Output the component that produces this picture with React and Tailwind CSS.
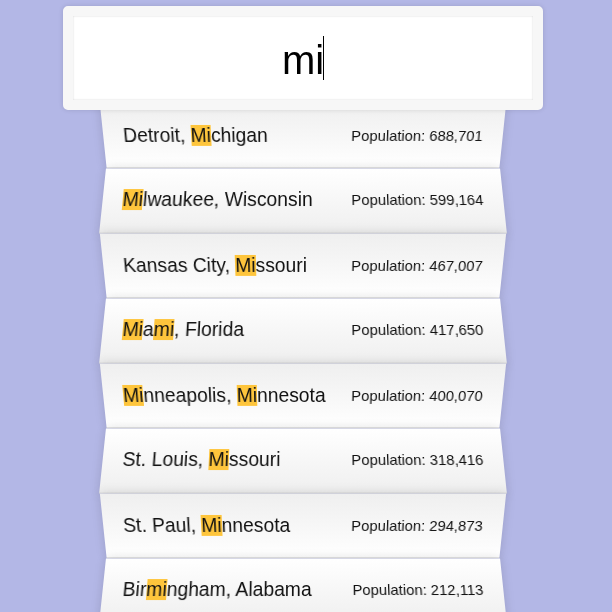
const cities = [
  { parts: [["Detroit, ", false], ["Mi", true], ["chigan", false]], pop: "688,701" },
  { parts: [["Mi", true], ["lwaukee, Wisconsin", false]], pop: "599,164" },
  { parts: [["Kansas City, ", false], ["Mi", true], ["ssouri", false]], pop: "467,007" },
  { parts: [["Mi", true], ["a", false], ["mi", true], [", Florida", false]], pop: "417,650" },
  { parts: [["Mi", true], ["nneapolis, ", false], ["Mi", true], ["nnesota", false]], pop: "400,070" },
  { parts: [["St. Louis, ", false], ["Mi", true], ["ssouri", false]], pop: "318,416" },
  { parts: [["St. Paul, ", false], ["Mi", true], ["nnesota", false]], pop: "294,873" },
  { parts: [["Bir", false], ["mi", true], ["ngham, Alabama", false]], pop: "212,113" },
];

function Suggestion({ city, odd }) {
  return (
    <li
      className={
        "flex justify-between items-start p-5 text-[19.3px] leading-6 text-[#111] border-b border-[#d8d8d8] shadow-[0_0_10px_rgba(0,0,0,0.14)] " +
        (odd
          ? "[transform:perspective(100px)_rotateX(-3deg)_translateY(3px)] bg-gradient-to-t from-white to-[#efefef]"
          : "[transform:perspective(100px)_rotateX(3deg)_translateY(2px)_scale(1.001)] bg-gradient-to-b from-white to-[#efefef]")
      }
    >
      <span>
        {city.parts.map(([text, hl], i) =>
          hl ? (
            <span key={i} className="bg-[#fec53c]">{text}</span>
          ) : (
            <span key={i}>{text}</span>
          )
        )}
      </span>
      <span className="text-[14.8px]">Population: {city.pop}</span>
    </li>
  );
}

export default function App() {
  return (
    <div className="min-h-screen w-full bg-[#b3b7e6] overflow-hidden font-['Liberation_Sans',Arial,sans-serif]">
      <div className="w-[606px]">
        <form className="mx-auto w-[400px] pt-[6px]" onSubmit={(e) => e.preventDefault()}>
          <div className="relative z-10 -ml-10 w-[480px]">
            <input
              type="text"
              defaultValue="mi"
              className="block w-full p-5 pt-[22px] pb-[18px] leading-[44px] text-[40px] text-black text-center bg-white border-[10px] border-[#f7f7f7] rounded-[5px] outline-none shadow-[0_0_5px_rgba(0,0,0,0.12),inset_0_0_2px_rgba(0,0,0,0.19)]"
            />
            {/* focused caret */}
            <span className="absolute left-[260px] top-[30px] h-[44px] w-px bg-black" />
          </div>
          <ul className="-mt-[9px] relative">
            {cities.map((c, i) => (
              <Suggestion key={i} city={c} odd={i % 2 === 0} />
            ))}
          </ul>
        </form>
      </div>
    </div>
  );
}
